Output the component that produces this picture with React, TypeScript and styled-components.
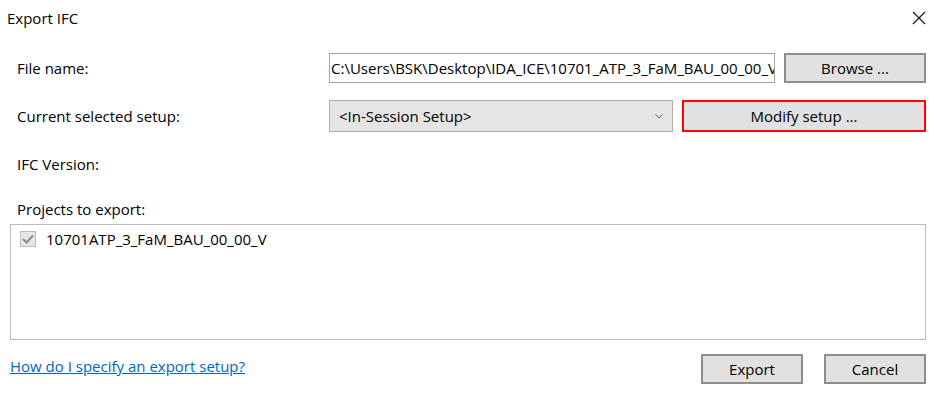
import styled, { createGlobalStyle } from 'styled-components';

const GlobalStyle = createGlobalStyle`
  html, body {
    margin: 0;
    padding: 0;
    background: #ffffff;
  }
  body {
    font-family: 'Open Sans', 'Noto Sans', sans-serif;
    font-size: 15px;
    color: #000000;
  }
`;

const FILE_PATH =
  'C:\\Users\\BSK\\Desktop\\IDA_ICE\\10701_ATP_3_FaM_BAU_00_00_V.ifc';

const CloseIcon = () => (
  <svg width="14" height="14" viewBox="0 0 14 14" aria-hidden="true">
    <path d="M1 1 L13 13 M13 1 L1 13" stroke="#1a1a1a" strokeWidth="1.2" fill="none" />
  </svg>
);

const ChevronIcon = () => (
  <svg width="8" height="5" viewBox="0 0 8 5" aria-hidden="true">
    <path d="M0.5 0.5 L4 4 L7.5 0.5" stroke="#606060" strokeWidth="1" fill="none" />
  </svg>
);

const CheckIcon = () => (
  <svg width="12" height="10" viewBox="0 0 12 10" aria-hidden="true">
    <path d="M1 5 L4.5 8.5 L11 1.5" stroke="#8a8a8a" strokeWidth="2" fill="none" />
  </svg>
);

export default function App() {
  return (
    <>
      <GlobalStyle />
      <Dialog>
        <TitleBar>
          <Title>Export IFC</Title>
          <CloseButton aria-label="Close">
            <CloseIcon />
          </CloseButton>
        </TitleBar>

        <Body>
          <FormRow>
            <Label>File name:</Label>
            <PathInput>{FILE_PATH}</PathInput>
            <Button $width={142}>Browse ...</Button>
          </FormRow>

          <FormRow $top={17}>
            <Label>Current selected setup:</Label>
            <Select>
              <span>&lt;In-Session Setup&gt;</span>
              <ChevronIcon />
            </Select>
            <Button $width={244} $highlight>
              Modify setup ...
            </Button>
          </FormRow>

          <PlainLabel $top={22}>IFC Version:</PlainLabel>
          <PlainLabel $top={25}>Projects to export:</PlainLabel>

          <ProjectList>
            <ProjectItem>
              <CheckBox>
                <CheckIcon />
              </CheckBox>
              10701ATP_3_FaM_BAU_00_00_V
            </ProjectItem>
          </ProjectList>

          <Footer>
            <HelpLink href="#">How do I specify an export setup?</HelpLink>
            <FooterButtons>
              <Button $width={102} $tall={30}>Export</Button>
              <Button $width={102} $tall={30}>Cancel</Button>
            </FooterButtons>
          </Footer>
        </Body>
      </Dialog>
    </>
  );
}

const Dialog = styled.div`
  width: 938px;
  height: 413px;
  display: flex;
  flex-direction: column;
  background: #ffffff;
  overflow: hidden;
`;

const TitleBar = styled.div`
  height: 36px;
  display: flex;
  align-items: center;
  justify-content: space-between;
  padding: 0 10px 0 7px;
`;

const Title = styled.div`
  margin-top: -1px;
`;

const CloseButton = styled.div`
  display: flex;
  align-items: center;
  padding-right: 2px;
`;

const Body = styled.div`
  display: flex;
  flex-direction: column;
  padding: 17px 12px 0 10px;
`;

const FormRow = styled.div<{ $top?: number }>`
  display: flex;
  align-items: center;
  gap: 9px;
  margin-top: ${({ $top }) => $top ?? 0}px;
  padding-left: 7px;
`;

const Label = styled.div`
  width: 303px;
  flex: none;
`;

const PlainLabel = styled.div<{ $top: number }>`
  margin-top: ${({ $top }) => $top}px;
  padding-left: 7px;
  line-height: 20px;
`;

const PathInput = styled.div`
  width: 446px;
  height: 30px;
  box-sizing: border-box;
  border: 1px solid #a6a6a6;
  background: #ffffff;
  padding: 0 0 0 1px;
  display: flex;
  align-items: center;
  white-space: nowrap;
  overflow: hidden;
  flex: none;
`;

const Select = styled.div`
  width: 344px;
  height: 32px;
  box-sizing: border-box;
  border: 1px solid #adadad;
  background: #e5e5e5;
  padding: 0 9px 0 9px;
  display: flex;
  align-items: center;
  justify-content: space-between;
  flex: none;
`;

const Button = styled.div<{ $width: number; $highlight?: boolean; $tall?: number }>`
  width: ${({ $width }) => $width}px;
  height: ${({ $tall, $highlight }) => $tall ?? ($highlight ? 32 : 30)}px;
  box-sizing: border-box;
  border: ${({ $highlight }) => ($highlight ? '2px solid #ff0000' : '2px solid #8c8c8c')};
  background: #e1e1e1;
  display: flex;
  align-items: center;
  justify-content: center;
  flex: none;
`;

const ProjectList = styled.div`
  margin-top: 5px;
  height: 116px;
  box-sizing: border-box;
  border: 1px solid #b9b9b9;
  padding: 6px 9px;
`;

const ProjectItem = styled.div`
  display: flex;
  align-items: center;
  gap: 10px;
  line-height: 16px;
`;

const CheckBox = styled.div`
  width: 16px;
  height: 16px;
  box-sizing: border-box;
  border: 1px solid #bcbcbc;
  background: #e6e6e6;
  display: flex;
  align-items: center;
  justify-content: center;
`;

const Footer = styled.div`
  display: flex;
  align-items: center;
  justify-content: space-between;
  margin-top: 14px;
`;

const HelpLink = styled.a`
  color: #0066cc;
  text-decoration: underline;
  margin-top: -6px;
`;

const FooterButtons = styled.div`
  display: flex;
  gap: 21px;
`;
